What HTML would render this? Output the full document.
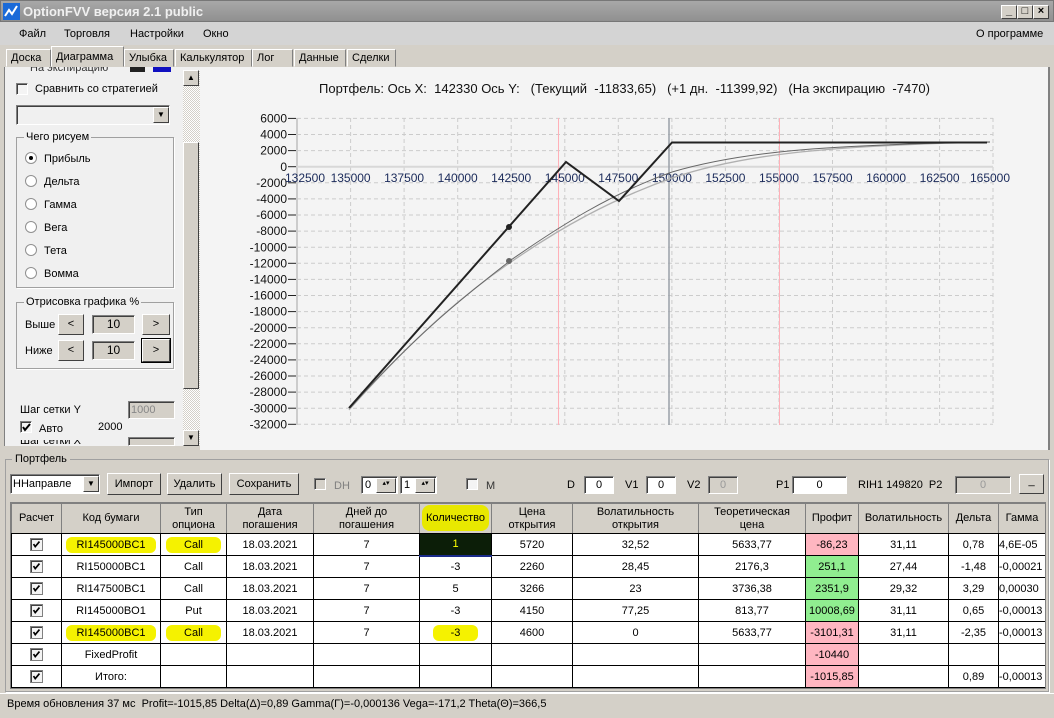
<!DOCTYPE html>
<html><head><meta charset="utf-8"><style>
*{box-sizing:border-box;margin:0;padding:0}
body{width:1054px;height:718px;position:relative;overflow:hidden;background:#d4d0c8;font-family:"Liberation Sans","DejaVu Sans",sans-serif;font-size:11px;color:#000}
.a{position:absolute}
.title{left:0;top:0;width:1054px;height:22px;background:linear-gradient(#a8a8a8,#909090);border:1px solid #777}
.title .t{left:22px;top:3px;color:#f0f0f0;font-weight:bold;font-size:13px;font-family:"Liberation Sans",sans-serif}
.wb{top:4px;width:16px;height:14px;background:#d4d0c8;border:1px solid;border-color:#fff #404040 #404040 #fff;font-size:11px;line-height:11px;text-align:center;font-weight:bold}
.menu{left:0;top:22px;width:1054px;height:23px;background:#d4d4d4}
.menu span{position:absolute;top:6px;font-size:11px}
.tab{top:49px;height:18px;background:#d4d0c8;border:1px solid;border-color:#fff #808080 #d4d0c8 #fff;font-size:11px;padding:0 4px;line-height:17px;overflow:hidden;z-index:3}
.box{border:1px solid #a0a0a0;box-shadow:1px 1px 0 #fff}
.cb{width:12px;height:12px;border:1px solid;border-color:#808080 #fff #fff #808080;background:#f4f4f4;box-shadow:inset 1px 1px 0 #404040}
.rd{width:12px;height:12px;border-radius:50%;background:#fff;border:1px solid #909090}
.btn{background:#d4d0c8;border:1px solid;border-color:#fff #404040 #404040 #fff;text-align:center;font-size:11px}
.inp{border:1px solid;border-color:#808080 #fff #fff #808080;background:#d4d0c8;box-shadow:inset 1px 1px 0 #404040;text-align:center;font-size:11px}
table{border-collapse:collapse;table-layout:fixed}
td{border:1px solid #000;text-align:center;height:22px;font-size:11px;white-space:nowrap;overflow:hidden;padding:0}
th{border:1px solid #808080;background:#d4d0c8;font-weight:normal;font-size:11px;height:30px;line-height:13px;border-bottom:1px solid #000}
.hl{background:#f5f200;border-radius:6px;padding:2px 10px}
.ck{display:inline-block;width:13px;height:13px;border:1px solid #808080;background:#f4f4f4;vertical-align:middle;box-shadow:inset 1px 1px 0 #404040}
</style></head><body>
<svg width="0" height="0" style="position:absolute"><defs><symbol id="chk" viewBox="0 0 13 13"><path d="M3,6 L5,9 L10,3" fill="none" stroke="#000" stroke-width="2"/></symbol></defs></svg>
<div class="a title"><svg class="a" style="left:2px;top:2px" width="17" height="17"><rect width="17" height="17" fill="#1a6ad8"/><polyline points="2,13 6,7 9,11 14,3" fill="none" stroke="#fff" stroke-width="2"/></svg><span class="a t">OptionFVV версия 2.1 public</span>
<div class="a wb" style="left:1000px">_</div><div class="a wb" style="left:1016px">□</div><div class="a wb" style="left:1032px">×</div></div>
<div class="a menu"><span style="left:19px">Файл</span><span style="left:64px">Торговля</span><span style="left:130px">Настройки</span><span style="left:203px">Окно</span><span style="left:976px">О программе</span></div>
<div class="a tab" style="left:6px;width:45px">Доска</div>
<div class="a tab" style="left:51px;top:46px;height:21px;width:73px;line-height:20px">Диаграмма</div>
<div class="a tab" style="left:124px;width:50px">Улыбка</div>
<div class="a tab" style="left:175px;width:77px">Калькулятор</div>
<div class="a tab" style="left:252px;width:41px">Лог</div>
<div class="a tab" style="left:294px;width:52px">Данные</div>
<div class="a tab" style="left:347px;width:49px">Сделки</div>
<!-- left panel -->
<div class="a" style="left:4px;top:67px;width:196px;height:383px;background:#f0f0f0;border-left:1px solid #808080"></div>
<div class="a" style="left:130px;top:67px;width:15px;height:5px;background:#222"></div><div class="a" style="left:153px;top:67px;width:18px;height:5px;background:#1010c0"></div><div class="a" style="left:30px;top:62px;font-size:11px;color:#333">На экспирацию</div>
<div class="a" style="left:4px;top:60px;width:196px;height:7px;background:#d4d0c8"></div>
<div class="a cb" style="left:16px;top:83px"></div><div class="a" style="left:35px;top:83px">Сравнить со стратегией</div>
<div class="a inp" style="left:16px;top:105px;width:154px;height:20px;background:#f0f0f0"></div><div class="a btn" style="left:153px;top:107px;width:16px;height:16px;font-size:8px;line-height:14px">▼</div>
<div class="a box" style="left:16px;top:137px;width:158px;height:151px"></div><div class="a" style="left:24px;top:131px;background:#f0f0f0;padding:0 2px">Чего рисуем</div>
<div class="a rd" style="left:25px;top:152px"></div><div class="a" style="left:29px;top:156px;width:4px;height:4px;background:#000;border-radius:50%"></div><div class="a" style="left:44px;top:153px">Прибыль</div>
<div class="a rd" style="left:25px;top:175px"></div><div class="a" style="left:44px;top:176px">Дельта</div>
<div class="a rd" style="left:25px;top:198px"></div><div class="a" style="left:44px;top:199px">Гамма</div>
<div class="a rd" style="left:25px;top:221px"></div><div class="a" style="left:44px;top:222px">Вега</div>
<div class="a rd" style="left:25px;top:244px"></div><div class="a" style="left:44px;top:245px">Тета</div>
<div class="a rd" style="left:25px;top:267px"></div><div class="a" style="left:44px;top:268px">Вомма</div>
<div class="a box" style="left:16px;top:302px;width:158px;height:67px"></div><div class="a" style="left:24px;top:296px;background:#f0f0f0;padding:0 2px">Отрисовка графика %</div>
<div class="a" style="left:25px;top:319px">Выше</div><div class="a btn" style="left:58px;top:314px;width:26px;height:21px;line-height:19px">&lt;</div><div class="a inp" style="left:92px;top:315px;width:43px;height:19px;font-size:12px;line-height:17px">10</div><div class="a btn" style="left:142px;top:314px;width:28px;height:21px;line-height:19px">&gt;</div>
<div class="a" style="left:25px;top:345px">Ниже</div><div class="a btn" style="left:58px;top:340px;width:26px;height:21px;line-height:19px">&lt;</div><div class="a inp" style="left:92px;top:341px;width:43px;height:19px;font-size:12px;line-height:17px">10</div><div class="a btn" style="left:142px;top:339px;width:28px;height:23px;line-height:21px;outline:1px solid #000">&gt;</div>
<div class="a" style="left:20px;top:404px">Шаг сетки Y</div><div class="a inp" style="left:128px;top:401px;width:47px;height:18px;color:#888;text-align:left;padding-left:2px;line-height:16px">1000</div>
<div class="a cb" style="left:20px;top:421px;background:#f4f4f4"></div><svg class="a" style="left:20px;top:421px" width="13" height="13"><use href="#chk"/></svg><div class="a" style="left:39px;top:423px">Авто</div><div class="a" style="left:98px;top:421px">2000</div>
<div class="a" style="left:20px;top:440px;height:6px;overflow:hidden;width:100px"><div style="margin-top:-5px">Шаг сетки X</div></div><div class="a inp" style="left:128px;top:437px;width:47px;height:9px"></div>
<div class="a" style="left:183px;top:70px;width:17px;height:376px;background:repeating-conic-gradient(#d4d0c8 0 25%,#fff 0 50%) 0 0/2px 2px"></div>
<div class="a btn" style="left:183px;top:70px;width:16px;height:16px;font-size:8px;line-height:14px">▲</div>
<div class="a btn" style="left:183px;top:142px;width:16px;height:247px"></div>
<div class="a btn" style="left:183px;top:430px;width:16px;height:16px;font-size:8px;line-height:14px">▼</div>
<div class="a" style="left:4px;top:446px;width:196px;height:4px;background:#d4d0c8"></div>
<!-- chart -->
<div class="a" style="left:200px;top:67px;width:850px;height:383px;background:#f4f4f4;border-right:2px solid #808080"></div>
<svg class="a" style="left:0;top:0" width="1054" height="450" font-family="Liberation Sans, sans-serif" font-size="12">
<text x="319" y="93" fill="#111" font-size="13" xml:space="preserve" textLength="611" lengthAdjust="spacing">Портфель: Ось X:  142330 Ось Y:   (Текущий  -11833,65)   (+1 дн.  -11399,92)   (На экспирацию  -7470)</text>
<g stroke="#ccc" stroke-dasharray="4,3" stroke-width="1">
<line x1="297" y1="118.4" x2="993" y2="118.4"/><line x1="297" y1="134.5" x2="993" y2="134.5"/><line x1="297" y1="150.6" x2="993" y2="150.6"/>
<line x1="297" y1="182.8" x2="993" y2="182.8"/><line x1="297" y1="198.9" x2="993" y2="198.9"/><line x1="297" y1="215" x2="993" y2="215"/><line x1="297" y1="231.1" x2="993" y2="231.1"/><line x1="297" y1="247.2" x2="993" y2="247.2"/><line x1="297" y1="263.3" x2="993" y2="263.3"/><line x1="297" y1="279.4" x2="993" y2="279.4"/><line x1="297" y1="295.5" x2="993" y2="295.5"/><line x1="297" y1="311.6" x2="993" y2="311.6"/><line x1="297" y1="327.7" x2="993" y2="327.7"/><line x1="297" y1="343.8" x2="993" y2="343.8"/><line x1="297" y1="359.9" x2="993" y2="359.9"/><line x1="297" y1="376" x2="993" y2="376"/><line x1="297" y1="392.1" x2="993" y2="392.1"/><line x1="297" y1="408.2" x2="993" y2="408.2"/><line x1="297" y1="424.3" x2="993" y2="424.3"/>
<line x1="350.6" y1="118" x2="350.6" y2="425"/><line x1="404.1" y1="118" x2="404.1" y2="425"/><line x1="457.7" y1="118" x2="457.7" y2="425"/><line x1="511.2" y1="118" x2="511.2" y2="425"/><line x1="564.8" y1="118" x2="564.8" y2="425"/><line x1="618.3" y1="118" x2="618.3" y2="425"/><line x1="671.9" y1="118" x2="671.9" y2="425"/><line x1="725.4" y1="118" x2="725.4" y2="425"/><line x1="779" y1="118" x2="779" y2="425"/><line x1="832.5" y1="118" x2="832.5" y2="425"/><line x1="886.1" y1="118" x2="886.1" y2="425"/><line x1="939.6" y1="118" x2="939.6" y2="425"/><line x1="993" y1="118" x2="993" y2="425"/>
</g>
<line x1="297" y1="118" x2="297" y2="425" stroke="#ccc" stroke-width="2"/>
<line x1="297" y1="166.7" x2="993" y2="166.7" stroke="#d8d8d8" stroke-width="2"/>
<line x1="558.5" y1="118" x2="558.5" y2="425" stroke="#ffb0b8"/>
<line x1="779.5" y1="118" x2="779.5" y2="425" stroke="#ffb0b8"/>
<line x1="669" y1="118" x2="669" y2="425" stroke="#9aa0a8" stroke-width="1.5"/>
<g stroke="#222"><line x1="288" y1="118.4" x2="296" y2="118.4"/><line x1="288" y1="134.5" x2="296" y2="134.5"/><line x1="288" y1="150.6" x2="296" y2="150.6"/><line x1="288" y1="166.7" x2="296" y2="166.7"/><line x1="288" y1="182.8" x2="296" y2="182.8"/><line x1="288" y1="198.9" x2="296" y2="198.9"/><line x1="288" y1="215" x2="296" y2="215"/><line x1="288" y1="231.1" x2="296" y2="231.1"/><line x1="288" y1="247.2" x2="296" y2="247.2"/><line x1="288" y1="263.3" x2="296" y2="263.3"/><line x1="288" y1="279.4" x2="296" y2="279.4"/><line x1="288" y1="295.5" x2="296" y2="295.5"/><line x1="288" y1="311.6" x2="296" y2="311.6"/><line x1="288" y1="327.7" x2="296" y2="327.7"/><line x1="288" y1="343.8" x2="296" y2="343.8"/><line x1="288" y1="359.9" x2="296" y2="359.9"/><line x1="288" y1="376" x2="296" y2="376"/><line x1="288" y1="392.1" x2="296" y2="392.1"/><line x1="288" y1="408.2" x2="296" y2="408.2"/><line x1="288" y1="424.3" x2="296" y2="424.3"/></g>
<g text-anchor="end" fill="#111">
<text x="287" y="122.5">6000</text><text x="287" y="138.6">4000</text><text x="287" y="154.7">2000</text><text x="287" y="170.8">0</text><text x="287" y="186.9">-2000</text><text x="287" y="203">-4000</text><text x="287" y="219.1">-6000</text><text x="287" y="235.2">-8000</text><text x="287" y="251.3">-10000</text><text x="287" y="267.4">-12000</text><text x="287" y="283.5">-14000</text><text x="287" y="299.6">-16000</text><text x="287" y="315.7">-18000</text><text x="287" y="331.8">-20000</text><text x="287" y="347.9">-22000</text><text x="287" y="364">-24000</text><text x="287" y="380.1">-26000</text><text x="287" y="396.2">-28000</text><text x="287" y="412.3">-30000</text><text x="287" y="428.4">-32000</text></g>
<g text-anchor="middle" fill="#1a2a5a">
<text x="305" y="182">132500</text><text x="350.6" y="182">135000</text><text x="404.1" y="182">137500</text><text x="457.7" y="182">140000</text><text x="511.2" y="182">142500</text><text x="564.8" y="182">145000</text><text x="618.3" y="182">147500</text><text x="671.9" y="182">150000</text><text x="725.4" y="182">152500</text><text x="779" y="182">155000</text><text x="832.5" y="182">157500</text><text x="886.1" y="182">160000</text><text x="939.6" y="182">162500</text><text x="990" y="182">165000</text></g>
<path d="M349,410 C420,330 470,290 511,262 C560,228 610,200 672,178 C740,155 820,146 990,142" fill="none" stroke="#b0b0b0" stroke-width="1.3"/>
<path d="M350,408 C420,330 470,292 511,260 C560,226 610,194 672,172 C740,152 820,145 990,142" fill="none" stroke="#666" stroke-width="1"/>
<polyline points="349,408 566,162 619,201 672,142.5 987,142.5" fill="none" stroke="#222" stroke-width="2"/>
<circle cx="509" cy="227" r="3" fill="#222"/><circle cx="509" cy="261" r="3" fill="#666"/>
</svg>
<!-- portfolio group -->
<div class="a" style="left:0;top:450px;width:1054px;height:242px;background:#d4d0c8"></div>
<div class="a box" style="left:5px;top:459px;width:1044px;height:233px"></div>
<div class="a" style="left:12px;top:453px;background:#d4d0c8;padding:0 3px">Портфель</div>
<div class="a inp" style="left:10px;top:474px;width:90px;height:20px;background:#fff;text-align:left;padding-left:2px;line-height:18px">ННаправле</div><div class="a btn" style="left:83px;top:476px;width:16px;height:16px;font-size:8px;line-height:14px">▼</div>
<div class="a btn" style="left:107px;top:473px;width:54px;height:22px;line-height:20px">Импорт</div>
<div class="a btn" style="left:167px;top:473px;width:55px;height:22px;line-height:20px">Удалить</div>
<div class="a btn" style="left:229px;top:473px;width:70px;height:22px;line-height:20px">Сохранить</div>
<div class="a cb" style="left:314px;top:478px;background:#d4d0c8"></div><div class="a" style="left:334px;top:480px;color:#808080">DH</div>
<div class="a inp" style="left:361px;top:476px;width:37px;height:18px;background:#fff;text-align:left;padding-left:3px;line-height:16px">0</div><div class="a btn" style="left:376px;top:478px;width:20px;height:15px;font-size:7px">▴▾</div>
<div class="a inp" style="left:400px;top:476px;width:37px;height:18px;background:#fff;text-align:left;padding-left:3px;line-height:16px">1</div><div class="a btn" style="left:415px;top:478px;width:20px;height:15px;font-size:7px">▴▾</div>
<div class="a cb" style="left:466px;top:478px;background:#f4f4f4"></div><div class="a" style="left:486px;top:480px;color:#333">M</div>
<div class="a" style="left:567px;top:479px">D</div><div class="a inp" style="left:584px;top:476px;width:30px;height:18px;background:#fff;line-height:16px">0</div>
<div class="a" style="left:625px;top:479px">V1</div><div class="a inp" style="left:646px;top:476px;width:30px;height:18px;background:#fff;line-height:16px">0</div>
<div class="a" style="left:687px;top:479px">V2</div><div class="a inp" style="left:708px;top:476px;width:30px;height:18px;color:#999;line-height:16px">0</div>
<div class="a" style="left:776px;top:479px">P1</div><div class="a inp" style="left:792px;top:476px;width:55px;height:18px;background:#fff;line-height:16px">0</div>
<div class="a" style="left:858px;top:479px">RIH1 149820&nbsp; P2</div><div class="a inp" style="left:955px;top:476px;width:56px;height:18px;color:#999;line-height:16px">0</div>
<div class="a btn" style="left:1019px;top:474px;width:25px;height:20px">_</div>
<div class="a" style="left:10px;top:502px;width:1036px;height:187px;background:#fff;border:1px solid #808080;overflow:hidden">
<table style="width:1034px;margin-left:0"><colgroup><col style="width:50px"><col style="width:99px"><col style="width:66px"><col style="width:87px"><col style="width:106px"><col style="width:72px"><col style="width:81px"><col style="width:126px"><col style="width:107px"><col style="width:53px"><col style="width:90px"><col style="width:50px"><col style="width:47px"></colgroup>
<tr><th>Расчет</th><th>Код бумаги</th><th>Тип<br>опциона</th><th>Дата<br>погашения</th><th>Дней до<br>погашения</th><th><span style="background:#e8e800;border-radius:8px;padding:7px 4px">Количество</span></th><th>Цена<br>открытия</th><th>Волатильность<br>открытия</th><th>Теоретическая<br>цена</th><th>Профит</th><th>Волатильность</th><th>Дельта</th><th>Гамма</th></tr>
<tr><td><svg class="ck" width="13" height="13"><use href="#chk"/></svg></td><td><span class="hl">RI145000BC1</span></td><td><span class="hl" style="padding:2px 18px">Call</span></td><td>18.03.2021</td><td>7</td><td style="background:#0c1e08;color:#ff0;border-bottom:2px solid #1a2a8a">1</td><td>5720</td><td>32,52</td><td>5633,77</td><td style="background:#ffb6c1">-86,23</td><td>31,11</td><td>0,78</td><td style="text-align:left">4,6E-05</td></tr>
<tr><td><svg class="ck" width="13" height="13"><use href="#chk"/></svg></td><td>RI150000BC1</td><td>Call</td><td>18.03.2021</td><td>7</td><td>-3</td><td>2260</td><td>28,45</td><td>2176,3</td><td style="background:#90ee90">251,1</td><td>27,44</td><td>-1,48</td><td style="text-align:left">-0,00021</td></tr>
<tr><td><svg class="ck" width="13" height="13"><use href="#chk"/></svg></td><td>RI147500BC1</td><td>Call</td><td>18.03.2021</td><td>7</td><td>5</td><td>3266</td><td>23</td><td>3736,38</td><td style="background:#90ee90">2351,9</td><td>29,32</td><td>3,29</td><td style="text-align:left">0,00030</td></tr>
<tr><td><svg class="ck" width="13" height="13"><use href="#chk"/></svg></td><td>RI145000BO1</td><td>Put</td><td>18.03.2021</td><td>7</td><td>-3</td><td>4150</td><td>77,25</td><td>813,77</td><td style="background:#90ee90">10008,69</td><td>31,11</td><td>0,65</td><td style="text-align:left">-0,00013</td></tr>
<tr><td><svg class="ck" width="13" height="13"><use href="#chk"/></svg></td><td><span class="hl">RI145000BC1</span></td><td><span class="hl" style="padding:2px 18px">Call</span></td><td>18.03.2021</td><td>7</td><td><span class="hl" style="padding:2px 18px">-3</span></td><td>4600</td><td>0</td><td>5633,77</td><td style="background:#ffb6c1">-3101,31</td><td>31,11</td><td>-2,35</td><td style="text-align:left">-0,00013</td></tr>
<tr><td><svg class="ck" width="13" height="13"><use href="#chk"/></svg></td><td>FixedProfit</td><td></td><td></td><td></td><td></td><td></td><td></td><td></td><td style="background:#ffb6c1">-10440</td><td></td><td></td><td></td></tr>
<tr><td><svg class="ck" width="13" height="13"><use href="#chk"/></svg></td><td>Итого:</td><td></td><td></td><td></td><td></td><td></td><td></td><td></td><td style="background:#ffb6c1">-1015,85</td><td></td><td>0,89</td><td style="text-align:left">-0,00013</td></tr>
</table></div>
<div class="a" style="left:0;top:693px;width:1054px;height:25px;background:#d4d0c8;border-top:1px solid #fff"></div>
<div class="a" style="left:7px;top:698px;font-size:11px">Время обновления 37 мс&nbsp; Profit=-1015,85 Delta(Δ)=0,89 Gamma(Γ)=-0,000136 Vega=-171,2 Theta(Θ)=366,5</div>
</body></html>
